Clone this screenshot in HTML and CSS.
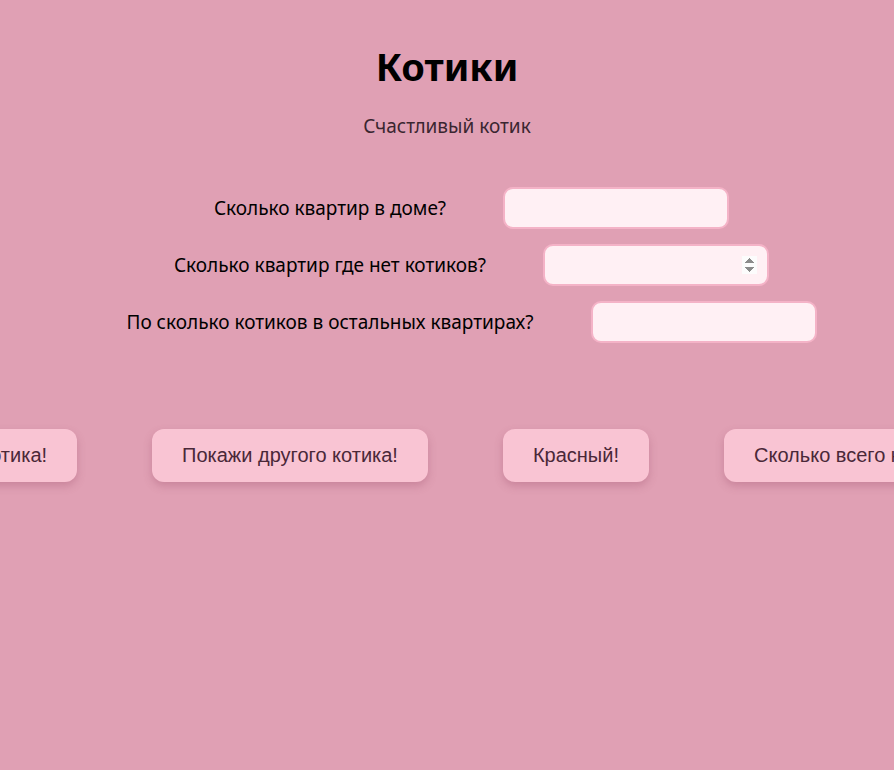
FILE: index.html
```html
<!DOCTYPE html>
<html lang="ru">
<head>
<meta charset="utf-8">
<title>Котики</title>
<link rel="stylesheet" href="styles.css">
</head>
<body>
<main class="page">
  <h1 class="title">Котики</h1>
  <p class="subtitle">Счастливый котик</p>
  <form class="form">
    <div class="row">
      <label class="label" for="f1">Сколько квартир в доме?</label>
      <input class="field" id="f1" type="text">
    </div>
    <div class="row">
      <label class="label" for="f2">Сколько квартир где нет котиков?</label>
      <input class="field" id="f2" type="number">
    </div>
    <div class="row">
      <label class="label" for="f3">По сколько котиков в остальных квартирах?</label>
      <input class="field" id="f3" type="text">
    </div>
  </form>
  <div class="buttons">
    <button class="btn" type="button">Покажи котика!</button>
    <button class="btn" type="button">Покажи другого котика!</button>
    <button class="btn" type="button">Красный!</button>
    <button class="btn" type="button">Сколько всего котиков?</button>
  </div>
</main>
</body>
</html>
```
FILE: styles.css
```css
html, body {
  margin: 0;
  padding: 0;
  background: #e0a0b4;
  height: 100%;
  overflow: hidden;
}
.page {
  font-family: "Noto Sans", "Open Sans", sans-serif;
  color: #000;
  padding-top: 40px;
}
.title {
  margin: 0;
  text-align: center;
  font-size: 38px;
  font-weight: 700;
  line-height: 52px;
}
.subtitle {
  margin: 21px 0 0;
  text-align: center;
  font-size: 19px;
  color: #3a2630;
  line-height: 26px;
}
.form {
  margin-top: 48px;
  display: flex;
  flex-direction: column;
  gap: 15px;
}
.row {
  display: flex;
  justify-content: center;
  align-items: center;
  gap: 57px;
  padding-left: 49px;
}
.label {
  font-size: 19px;
  line-height: 24px;
}
.field {
  box-sizing: border-box;
  width: 226px;
  height: 42px;
  border: 2px solid #f4b3c7;
  border-radius: 10px;
  background: #fff0f4;
  padding: 0 10px;
  font-size: 16px;
  outline: none;
}
.field::-webkit-inner-spin-button {
  opacity: 1;
}
.buttons {
  margin-top: 86px;
  display: flex;
  justify-content: center;
  gap: 75px;
  padding-right: 16px;
}
.btn {
  flex: none;
  height: 53px;
  padding: 0 30px;
  border: none;
  border-radius: 12px;
  background: #f9c4d3;
  color: #4a2838;
  font-family: "Liberation Sans", Arial, sans-serif;
  font-size: 20px;
  box-shadow: 0 4px 8px rgba(150, 70, 100, 0.3);
  white-space: nowrap;
}
```
